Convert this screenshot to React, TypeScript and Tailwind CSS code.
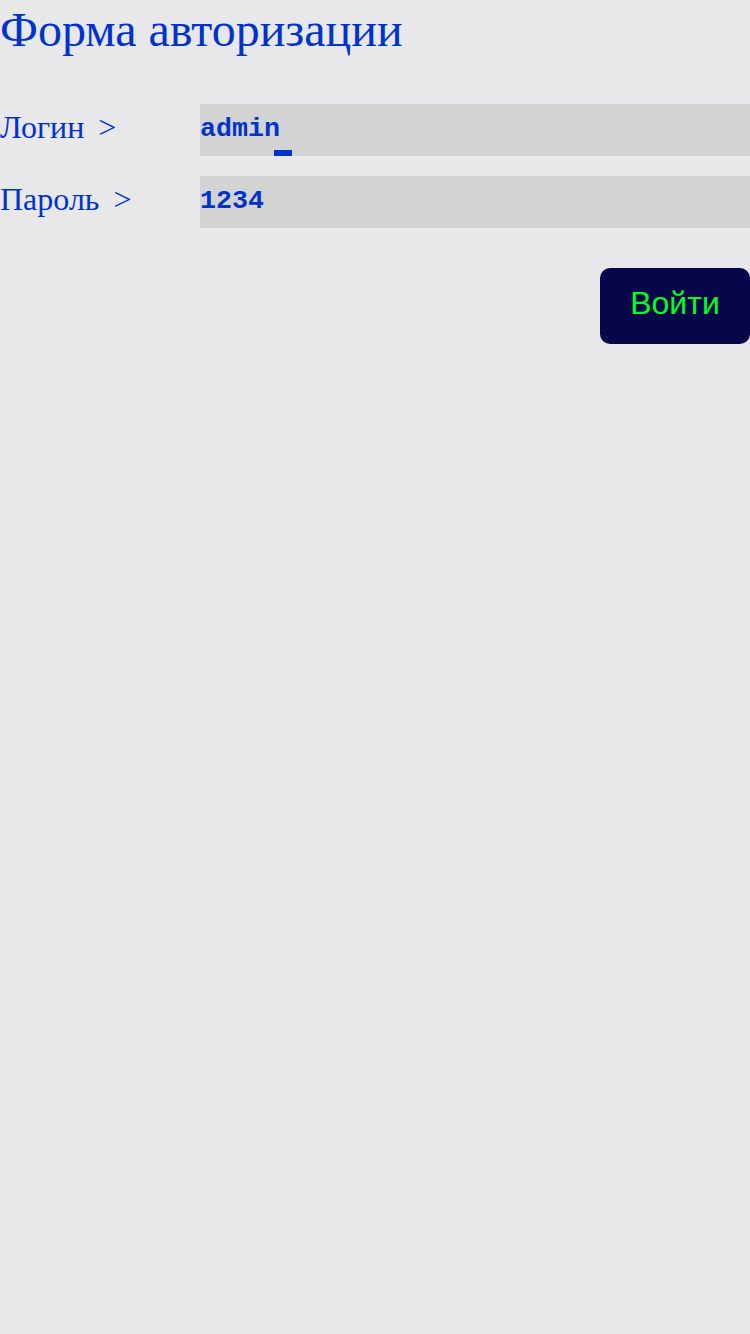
import { useState } from 'react'

// Login form row
function Field({ label, value, onChange, caret }: { label: string; value: string; onChange: (v: string) => void; caret?: boolean }) {
  return (
    <div className="flex items-center h-[52px]">
      <label className="w-[200px] shrink-0 pb-[6px] text-[32px] leading-none text-[#0033cc] whitespace-pre [font-family:'Liberation_Serif',serif]">
        {label} <span className="ml-[6px]">&gt;</span>
      </label>
      <div className="relative flex-1 h-full bg-[#d3d3d3]">
        <input
          value={value}
          onChange={(e) => onChange(e.target.value)}
          className="w-full h-full bg-transparent outline-none border-0 px-0 pt-0 pb-[2px] text-[26.67px] font-bold text-[#0033cc] [font-family:'Liberation_Mono',monospace]"
        />
        {caret && <span className="absolute left-[74px] bottom-0 w-[18px] h-[6px] bg-[#0033cc]" />}
      </div>
    </div>
  )
}

function App() {
  const [login, setLogin] = useState('admin')
  const [password, setPassword] = useState('1234')

  return (
    <div className="min-h-screen w-full bg-[#e8e8ea]">
      <h1 className="text-[48px] leading-[60px] text-[#0033cc] [font-family:'Liberation_Serif',serif]">
        Форма авторизации
      </h1>

      <form className="mt-[44px] flex flex-col gap-[20px]" onSubmit={(e) => e.preventDefault()}>
        <Field label="Логин" value={login} onChange={setLogin} caret />
        <Field label="Пароль" value={password} onChange={setPassword} />

        <div className="flex justify-end mt-[20px]">
          <button
            type="submit"
            className="w-[150px] h-[76px] pb-[6px] rounded-[10px] bg-[#08064a] text-[#00ff22] text-[32px] [font-family:'Liberation_Sans',sans-serif]"
          >
            Войти
          </button>
        </div>
      </form>
    </div>
  )
}

export default App
